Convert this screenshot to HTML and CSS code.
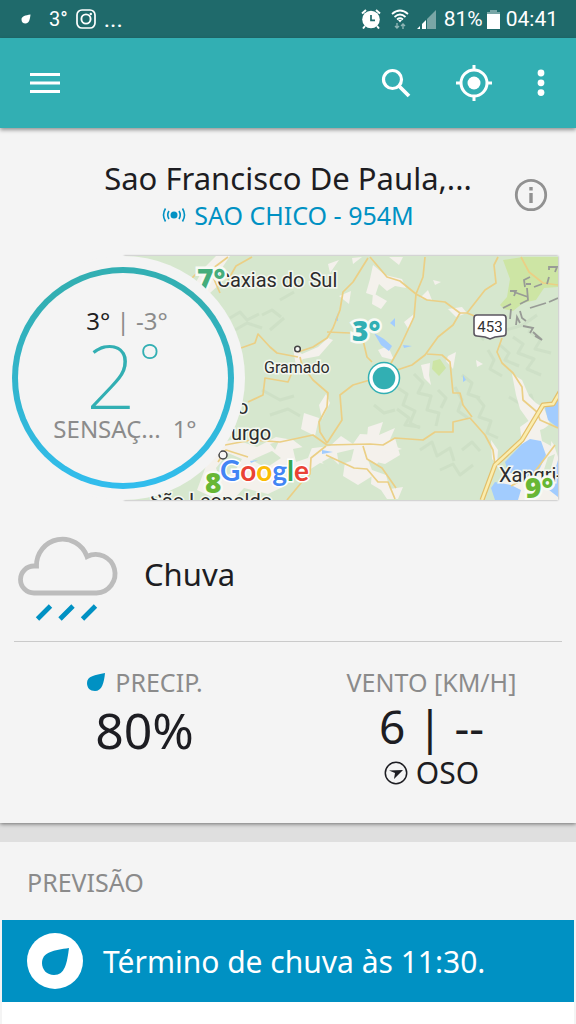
FILE: index.html
```html
<!DOCTYPE html>
<html lang="pt-BR">
<head>
<meta charset="utf-8">
<meta name="viewport" content="width=device-width, initial-scale=1">
<title>Previsão do tempo</title>
<link rel="stylesheet" href="styles.css">
</head>
<body>
<div class="status">
  <div class="status-left">
    <svg class="status-drop" width="10" height="10" viewBox="0 0 20 20" aria-hidden="true"><path d="M19 1C9 3 1 4 1 11c0 5 3 8 8 8 7 0 9-8 10-18z" fill="#fff"/></svg>
    <span class="status-temp">3°</span>
    <svg width="20" height="20" viewBox="0 0 20 20" fill="none" stroke="#fff" aria-hidden="true"><rect x="1" y="1" width="18" height="18" rx="5" stroke-width="1.7"/><circle cx="10" cy="10" r="4.6" stroke-width="1.9"/><circle cx="14.8" cy="5" r="1.2" fill="#fff" stroke="none"/></svg>
    <span class="status-dots">...</span>
  </div>
  <div class="status-right">
    <svg class="status-alarm" width="20" height="20" viewBox="0 0 20 20" aria-hidden="true"><circle cx="10" cy="10.5" r="8.8" fill="#fff"/><path d="M1 4.5 5 1M19 4.500 15 1M4 17l-2 2.500M16 17l2 2.500" stroke="#fff" stroke-width="2" fill="none"/><path d="M10 6v5.300h4" stroke="#1f6a6b" stroke-width="1.700" fill="none"/></svg>
    <svg width="18" height="20" viewBox="0 0 18 20" fill="none" stroke="#fff" stroke-width="1.700" aria-hidden="true"><path d="M1 5Q9-2 17 5M3.500 8Q9 3 14.500 8M6 10.500Q9 8 12 10.500"/><path d="m7 11 2 2.500 2-2.500z" fill="#fff" stroke="none"/><path d="M6 14v5M4 17l2 2 2-2M12 20v-5M10 17l2-2 2 2" stroke="#8fb5b5" stroke-width="1.400"/></svg>
    <svg width="19" height="20" viewBox="0 0 19 20" aria-hidden="true"><path d="M10 10 19 1v19h-9z" fill="#79a6a6"/><path d="M0 20h3v-3zM5 20h4v-9L5 15z" fill="#fff"/></svg>
    <span>81%</span>
    <svg class="status-battery" width="13" height="20" viewBox="0 0 13 20" aria-hidden="true"><path d="M3 1h7v2h3v3H0V3h3z" fill="#79a6a6"/><path d="M0 5h13v15H0z" fill="#fff"/></svg>
    <span>04:41</span>
  </div>
</div>

<header class="appbar">
  <button class="icon-button" type="button" aria-label="Menu">
    <svg width="30" height="22" viewBox="0 0 30 22" aria-hidden="true"><path d="M0 2.500h30M0 11h30M0 19.500h30" stroke="#fff" stroke-width="3"/></svg>
  </button>
  <div class="appbar-actions">
    <button class="icon-button" type="button" aria-label="Pesquisar">
      <svg width="30" height="30" viewBox="0 0 30 30" fill="none" stroke="#fff" stroke-width="3.200" aria-hidden="true"><circle cx="11.500" cy="11.500" r="9"/><path d="m18 18 10 10" stroke-width="3.800"/></svg>
    </button>
    <button class="icon-button" type="button" aria-label="Minha localização">
      <svg width="36" height="36" viewBox="0 0 36 36" fill="none" stroke="#fff" stroke-width="3" aria-hidden="true"><circle cx="18" cy="18" r="13"/><circle cx="18" cy="18" r="6.500" fill="#fff" stroke="none"/><path d="M18 0v5M18 31v5M0 18h5M31 18h5"/></svg>
    </button>
    <button class="icon-button" type="button" aria-label="Mais opções">
      <svg width="8" height="28" viewBox="0 0 8 28" fill="#fff" aria-hidden="true"><circle cx="4" cy="4" r="3.400"/><circle cx="4" cy="13.800" r="3.400"/><circle cx="4" cy="23.600" r="3.400"/></svg>
    </button>
  </div>
</header>

<main>
<section class="current">
  <div class="place">
    <div class="place-names">
      <h1>Sao Francisco De Paula,...</h1>
      <a class="station" href="#estacao">
        <svg width="24" height="16" viewBox="0 0 24 16" fill="none" stroke="#0091c3" stroke-width="1.600" aria-hidden="true"><circle cx="12" cy="8" r="3.500" fill="#0091c3" stroke="none"/><path d="M7 4Q4.500 8 7 12M17 4q2.500 4 0 8M3.500 1.500q-4 6.500 0 13M20.500 1.500q4 6.500 0 13"/></svg>
        <span>SAO CHICO - 954M</span>
      </a>
    </div>
    <button class="icon-button info" type="button" aria-label="Informações">
      <svg width="34" height="34" viewBox="0 0 34 34" aria-hidden="true"><circle cx="17" cy="17" r="14.700" fill="none" stroke="#919191" stroke-width="2.800"/><path d="M17 9v3.500M17 15v10" stroke="#919191" stroke-width="3.400"/></svg>
    </button>
  </div>

  <div class="hero">
    <svg class="map" viewBox="124 256 434 244" preserveAspectRatio="xMaxYMid slice" role="img" aria-label="Mapa da região">
      <rect x="100" y="256" width="460" height="244" fill="#d6e7ce"/>
      <g fill="none" stroke="#c5d8be" stroke-width="3" stroke-linejoin="round" opacity=".45">
        <path d="M230 318l10-6 7 8 12-6M235 330l12-7 15 5M262 315l10-5 9 7M280 300l14-8M270 330l14-12M262 390l18 10 14-4M270 415l18-6 12 7"/>
        <path d="M398 388l9 6-4 11 12 6-5 12 10 5M414 374l9 9-5 10 13 3-4 14 12 3-3 13M438 390l8 8-5 10M462 375l10 8-4 11 12 4M476 396l8 10-5 11 12 4-4 12 11 5"/>
        <path d="M500 345l9 8-4 7 14 6M513 337l10 7-5 9 16 6-7 10 14 6M528 331l13 8-6 10 16 4M503 331l20-6 14-10M420 450l12-8 5 14 13-8 4 13M440 470l13-6 7 11 13-10M397 409l12 9-4 7 15 2M509 397l10 6 12-8 4 14 13-6"/>
        <path d="M488 350l6 10-4 9 12 7M482 340l7-9M462 450l10-8 8 9M455 387l7 13-4 11 10 7M374 405l10 8 11-3"/>
      </g>
      <g fill="#f4f1ec">
        <path d="M196 282l8-14 12-12h14l-8 12-2 16-10 9zM373 265l12 10 17 4 4 9-11-2-8 5-8-7-4 12-9-3 4-14zM373 293l14 8-6 8-9-5zM328 264l11-4-9 13zM285 287l8-9 6 5zM293 348l9 6 16-7 10-9 5 2-14 16-16 3-7 7zM352 258l10-1-9 7zM339 296l12-5-2 13z"/>
        <path d="M404 322l10-8-5 16zM420 298l8-8 4 10zM448 309l14-2 5 6-11 4zM421 365l9-2-1 12 2 10-7-7zM448 356l8-4-3 17-7-8zM476 360l7 4-6 3zM378 350l10-4 6 14-12-3zM389 257h14l-4 8zM433 280l8 2-6 3z"/>
        <path d="M197 490l12-32 9-14 16-5 23 8 19-10 17 3 12 9 25-3 11-10 12 8 7-10 18 1 9 6 8-3 5 17-15 9-17-4 6 15-16 10-15-9 2-14-10 4-15-3-11 7-12-3-10 18-19 9-24-6-10 11h-18zM304 413l15 5-4 18-14-7zM326 394l4 9-8 16-3-14z"/>
        <path d="M368 427l15-5-4 13 16-7-7 16 14 5-18 4-7 11-12-7zM372 470l14 5 4 14 13-2-5 12h-11l-6-9-10-6zM491 440l7 10-1 15-5-6zM512 374l10 6 7 16 7 7 8 5 6 16-9 7-11-8-10-14-4-14zM520 427l14-10 20 28 5 15v40h-63l9-26 18-22z"/>
      </g>
      <g fill="#d6e7ce"><path d="M216 468l12-15 14 6-7 12-15 8zM252 460l20-9 9 7-15 10zM293 449l20-4-5 13-12 4zM337 453l17-4-3 12-12 4zM540 430l12-4-1 20-9-5zM541 479l7-22 7-3-8 28zM322 462l9-5 8 8-10 5zM270 444l9-3-4 9z"/></g>
      <path d="M503 260l20-3h35v30l-14 1-8 12-13 3-10 8-9-2-4-4 7-8 3-18zM433 361l7-2 6 9-7 8-7-7z" fill="#cde5a4"/>
      <g fill="#a2ccfe"><path d="M545 408l13-12v32l-10-8zM522 444l8-5 11 2 5 14-6 13-10 12-22-8-3-10zM495 482l16 3 10 5-3 10h-23l-4-12zM549 490l9-30v37zM390 323l5-5v9zM374 333l10 6 8 7-3 5-8-6zM403 345l9 1-8 2zM335 320l3-7v8zM463 375l3 5-3 2zM322 450l11 2-11 2zM250 461l8-1-7 3z"/></g>
      <g fill="none" stroke="#ebcf85" stroke-width="1.700" stroke-linejoin="round">
        <path d="M368 258l-15 24-10 10-3 18-7 18-6 10-14 9-15 5M298 357l-21-4-7-6-12-13-3 9-14 5M300 357l2 8 11 15 15 13-1 14-8 15 1 10 7 11M293 370l-5 12-23-4-2 17-15 7M327 443l15-23-2-25 13-10 17-5M225 445l27-5 28 2 33-7 14 10 43-1 13 1 12-7 28 2 12-8 18 0v-10l17-4 15 17 8 15 2 15M327 332l23 1M363 340l4 17 5 5"/>
        <path d="M370 257l17 20 13 4 16 13 11 6 18 2 15 11h7l10 4M425 257l-2 20-7 17-2 23-14 30-10 18M498 257l-4 8 2 18-11 7-18 23M460 313l-7 12-15 12-13 18-13 10-15 5-7 5M427 354l15 1 8 7 3 31h7l3 12 9 12M502 338l-5 14 5 11 11 10 9 14 1 13 14 12 3 8 18 8"/>
        <path d="M326 446l-15 12-1 16-9 9-14 17M326 455l28 13 13 1 11 13h10l7 17M363 446l4 13 15 9 14 20M228 280l8-14 16-9M188 282l10-10 14-3 16-12M210 270l10 23M218 462l8-12 22 7M521 257l8 15 14 11 15 2M555 445l-22 29-22 12"/>
      </g>
      <g fill="none" stroke-linejoin="round"><path d="M482 500l13-35 27-25 21-35 10-1 7-12" stroke="#e3bf69" stroke-width="5"/><path d="M482 500l13-35 27-25 21-35 10-1 7-12" stroke="#faedaf" stroke-width="2.500"/></g>
      <path d="M525 287l-1-7 6-3M526 284h5M510 291l6 0-2 5M514 292l14 5M527 288l1 12-8 4M503 308l8-4M511 309l-1 10M520 311l2 7 4 3M516 325l1-8 3 6M523 326l10 2-3 5M533 332l9 8-7-4M534 287l8-3M530 308l16-5M549 302l9-4M547 284l2-7M549 270v-3h8l-2 5" fill="none" stroke="#989b96" stroke-width="1.800"/>
      <g class="map-town">
        <text x="217" y="287">Caxias do Sul</text>
        <text class="map-town-small" x="264" y="373">Gramado</text>
        <text x="237" y="414">o</text>
        <text x="231" y="440">urgo</text>
        <text x="150" y="508">São Leopoldo</text>
        <text x="499" y="482">Xangri-</text>
      </g>
      <g fill="#f7f7f4" stroke="#444" stroke-width="1.500"><circle cx="297.500" cy="349" r="2.800"/><circle cx="223" cy="455" r="4"/></g>
      <path d="M477 315h26q3 0 3 3v15q0 3-3 3l-8 1-5 2-5-2-8-1q-3 0-3-3v-15q0-3 3-3z" fill="#fff" stroke="#5b5660" stroke-width="1.600"/>
      <text class="map-road" x="490" y="332">453</text>
      <g class="map-temp">
        <text x="197" y="289" fill="#45ad7b">7°</text>
        <text x="352" y="341" fill="#32afb3">3°</text>
        <text x="205" y="493" fill="#68b735">8</text>
        <text x="525" y="498" fill="#68b735">9°</text>
      </g>
      <circle cx="384" cy="378" r="15.500" fill="#fff" stroke="#32afb3" stroke-width="1.500"/><circle cx="384" cy="378" r="11.300" fill="#32afb3"/>
      <text class="map-brand" x="220" y="481"><tspan fill="#4285f4">G</tspan><tspan fill="#ea4335">o</tspan><tspan fill="#fbbc05">o</tspan><tspan fill="#4285f4">g</tspan><tspan fill="#34a853">l</tspan><tspan fill="#ea4335">e</tspan></text>
    </svg>
    <div class="dial">
      <div class="dial-face">
        <div class="range"><span class="range-high">3°</span> | -3°</div>
        <div class="now">2<span class="now-degree">°</span></div>
        <div class="feels"><span>SENSAÇ...</span><span>1°</span></div>
      </div>
    </div>
  </div>

  <div class="condition">
    <svg width="104" height="90" viewBox="0 0 104 90" fill="none" stroke-width="4.800" aria-hidden="true"><path d="M18 59h62.500A19.300 19.300 0 1 0 71 22.500A26 26 0 0 0 20.500 32H18A13.500 13.500 0 0 0 18 59z" stroke="#bcbcbc"/><path d="m21.500 85 13-13M44 85l13-13M66.500 85l13-13" stroke="#0091c3"/></svg>
    <span>Chuva</span>
  </div>

  <div class="stats">
    <div class="stat">
      <div class="stat-label"><svg width="20" height="20" viewBox="0 0 20 20" aria-hidden="true"><path d="M19 1C9 3 1 4 1 11c0 5 3 8 8 8 7 0 9-8 10-18z" fill="#0091c3"/></svg>PRECIP.</div>
      <div class="stat-value stat-percent">80%</div>
    </div>
    <div class="stat">
      <div class="stat-label">VENTO [KM/H]</div>
      <div class="stat-value">6 | --</div>
      <div class="direction"><svg width="24" height="24" viewBox="0 0 24 24" aria-hidden="true"><circle cx="12" cy="12" r="10.700" fill="none" stroke="#1d1d22" stroke-width="1.500"/><path d="m5 9.500 14-0.500-9 9 1-6z" fill="#1d1d22"/></svg>OSO</div>
    </div>
  </div>
</section>

<section class="forecast">
  <h2>PREVISÃO</h2>
  <a class="alert" href="#chuva">
    <svg width="56" height="56" viewBox="0 0 56 56" aria-hidden="true"><circle cx="28" cy="28" r="28" fill="#fff"/><path d="M42 15C27 17 15 19 15 30c0 7 5 12 12 12 11 0 13-12 15-27z" fill="#0091c3"/></svg>
    <span>Término de chuva às 11:30.</span>
  </a>
  <div class="forecast-body"></div>
</section>
</main>
</body>
</html>
```
FILE: styles.css
```css
* { box-sizing: border-box; }

body {
  margin: 0;
  min-height: 100vh;
  display: flex;
  flex-direction: column;
  background: #dfdfdf;
  color: #1d1d22;
  font-family: "Noto Sans", "Open Sans", sans-serif;
}

svg { display: block; flex: none; }
a { color: inherit; text-decoration: none; }
h1, h2 { margin: 0; font-weight: 400; }

.status {
  display: flex;
  justify-content: space-between;
  height: 38px;
  padding: 0 18px 0 21px;
  background: #1f6a6b;
  color: #fff;
  font: 21px/40px Roboto, sans-serif;
}
.status-left, .status-right { display: flex; align-items: center; }
.status-temp { margin: 0 8px 0 18px; font-size: 20px; }
.status-dots { margin-left: 8px; font-size: 24px; }
.status-right { gap: 8px; }
.status-alarm { margin-right: 2px; }
.status-battery { margin: 0 -2px 0 -4px; }

.appbar {
  position: relative;
  display: flex;
  align-items: center;
  justify-content: space-between;
  height: 90px;
  padding: 0 31px 0 30px;
  background: #32afb3;
  box-shadow: 0 2px 4px rgba(0, 0, 0, .4);
}
.appbar-actions { display: flex; align-items: center; gap: 45px; }
.icon-button { padding: 0; border: 0; background: none; cursor: pointer; }

main { flex: 1; display: flex; flex-direction: column; gap: 19px; }

.current {
  padding-bottom: 31px;
  background: #f4f4f4;
  box-shadow: 0 1px 4px rgba(0, 0, 0, .5);
}

.place {
  display: grid;
  grid-template-columns: 46px 1fr 46px;
  align-items: center;
  padding: 30px 22px 24px;
}
.place-names {
  grid-column: 2;
  display: flex;
  flex-direction: column;
  align-items: center;
  white-space: nowrap;
}
h1 { font-size: 31px; line-height: 40px; }
.station {
  display: flex;
  align-items: center;
  gap: 8px;
  color: #0091c3;
  font-size: 25px;
  line-height: 34px;
}
.info { justify-self: center; }

.hero { display: grid; padding-right: 18px; }
.map {
  grid-area: 1 / 1;
  width: calc(100% - 124px);
  height: 244px;
  margin-left: 124px;
  box-shadow: 0 0 2px rgba(0, 0, 0, .4);
}
.map-town { font: 20px Roboto, sans-serif; fill: #2c2c2c; stroke: #f4f7f0; stroke-width: 3px; paint-order: stroke; }
.map-town-small { font-size: 16px; }
.map-road { font: 15px Roboto, sans-serif; fill: #333; text-anchor: middle; }
.map-temp { font: 800 28px "Open Sans", sans-serif; stroke: #f8faf5; stroke-width: 5px; paint-order: stroke; }
.map-brand { font: 700 28px Lato, sans-serif; stroke: #fff; stroke-width: 3px; paint-order: stroke; }

.dial {
  grid-area: 1 / 1;
  z-index: 1;
  width: 244px;
  height: 244px;
  margin-left: 1px;
  padding: 11px;
  border-radius: 50%;
  background: #f4f4f4;
}
.dial-face {
  display: flex;
  flex-direction: column;
  align-items: center;
  justify-content: center;
  height: 100%;
  padding-bottom: 6px;
  border: 6px solid transparent;
  border-radius: 50%;
  background: linear-gradient(#f4f4f4, #f4f4f4) padding-box, linear-gradient(#32afb3 15%, #31bdee) border-box;
  color: #8b8b8b;
  font-size: 24px;
  line-height: 34px;
  white-space: nowrap;
}
.range { padding-left: 8px; }
.range-high { color: #1d1d22; }
.now {
  position: relative;
  padding-right: 24px;
  color: #32afb3;
  font-size: 88px;
  font-weight: 200;
  line-height: 74px;
}
.now-degree {
  position: absolute;
  top: -2px;
  right: -1px;
  font-size: 52px;
  font-weight: 200;
  line-height: 52px;
}
.feels { display: flex; gap: 12px; padding-left: 4px; }

.condition {
  display: flex;
  align-items: flex-start;
  gap: 24px;
  margin: 0 14px;
  padding: 34px 0 17px 2px;
  border-bottom: 1px solid #cacaca;
  font-size: 31px;
  line-height: 60px;
}
.condition span { padding-top: 10px; }

.stats { display: grid; grid-template-columns: 1fr 1fr; padding: 22px 1px 0; }
.stat { display: flex; flex-direction: column; align-items: center; }
.stat-label {
  display: flex;
  align-items: center;
  gap: 9px;
  color: #8b8b8b;
  font-size: 25px;
  line-height: 36px;
}
.stat-value { font-size: 46px; line-height: 52px; }
.stat-percent { padding-top: 4px; font-size: 50px; }
.direction { display: flex; align-items: center; gap: 8px; padding-top: 2px; font-size: 30px; line-height: 38px; }

.forecast { flex: 1; display: flex; flex-direction: column; padding: 0 2px; background: #f4f4f4; }
h2 { padding: 22px 25px 20px; color: #8b8b8b; font-size: 25px; line-height: 36px; }
.alert {
  display: flex;
  align-items: center;
  gap: 20px;
  min-height: 82px;
  padding: 0 25px;
  background: #0091c3;
  color: #fff;
  font-size: 30px;
}
.forecast-body { flex: 1; min-height: 22px; background: #fff; }
```
